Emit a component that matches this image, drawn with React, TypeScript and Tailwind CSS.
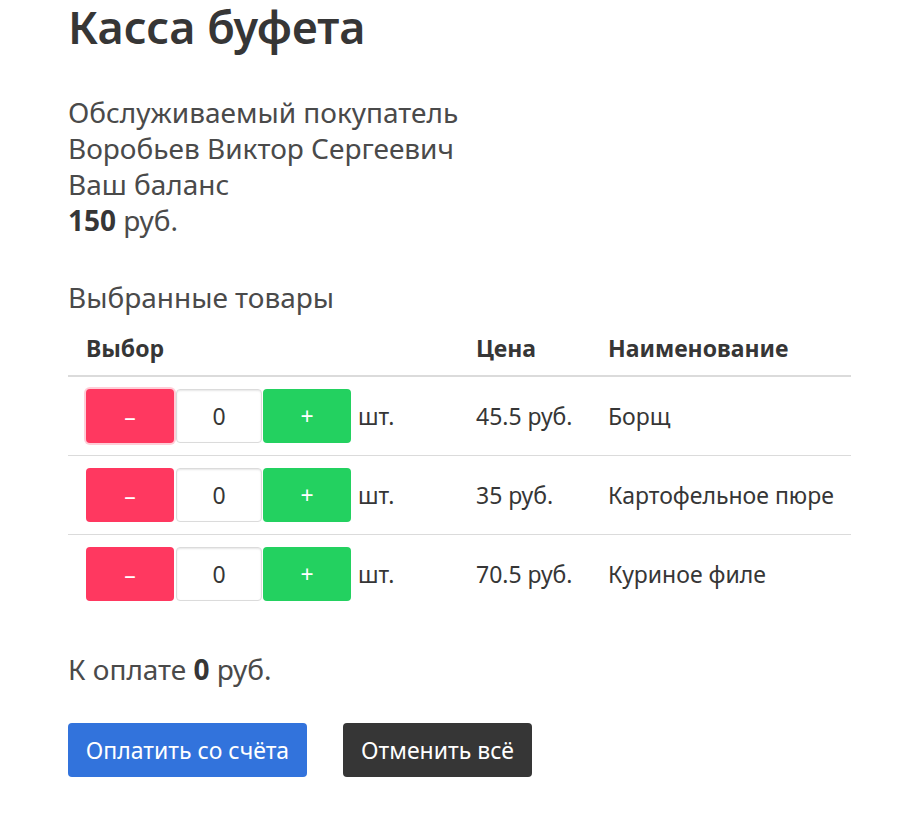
import React from "react";

const items = [
  { price: "45.5 руб.", name: "Борщ", focus: true },
  { price: "35 руб.", name: "Картофельное пюре", focus: false },
  { price: "70.5 руб.", name: "Куриное филе", focus: false },
];

export default function App() {
  return (
    <div
      className="min-h-screen bg-white text-[#4a4a4a]"
      style={{ fontFamily: '"Noto Sans", "Open Sans", sans-serif' }}
    >
      <div className="pl-[68px] w-[851px]">
        <h1 className="text-[45px] leading-[54px] font-semibold text-[#363636]">Касса буфета</h1>
        <div className="mt-[40px] text-[28px] leading-[36px]">
          <div>Обслуживаемый покупатель</div>
          <div>Воробьев Виктор Сергеевич</div>
          <div>Ваш баланс</div>
          <div>
            <strong className="font-bold text-[#363636]">150</strong> руб.
          </div>
        </div>
        <div className="mt-[41px] text-[28px] leading-[36px]">Выбранные товары</div>
        <table className="mt-[6px] w-[783px] table-fixed border-collapse text-[23px] leading-[30px] text-[#363636]">
          <colgroup>
            <col className="w-[390px]" />
            <col className="w-[132px]" />
            <col className="w-[261px]" />
          </colgroup>
          <thead>
            <tr className="border-b-2 border-[#dbdbdb]">
              <th className="text-left font-bold px-[18px] py-[12px]">Выбор</th>
              <th className="text-left font-bold px-[18px] py-[12px]">Цена</th>
              <th className="text-left font-bold px-[18px] py-[12px]">Наименование</th>
            </tr>
          </thead>
          <tbody>
            {items.map((it, i) => (
              <tr key={i} className={i < items.length - 1 ? "border-b border-[#dbdbdb]" : ""}>
                <td className="px-[18px] py-[12px]">
                  <div className="flex items-center">
                    <button
                      className={
                        "w-[88px] h-[54px] rounded-[4px] bg-[#ff3860] text-white text-[23px] flex items-center justify-center " +
                        (it.focus ? "shadow-[0_0_0_2px_rgba(255,56,96,0.25)]" : "")
                      }
                    >
                      –
                    </button>
                    <div className="ml-[2px] w-[86px] h-[54px] rounded-[4px] border border-[#dbdbdb] bg-white shadow-[inset_0_1px_2px_rgba(10,10,10,0.1)] flex items-center justify-center text-[23px] text-[#363636]">
                      0
                    </div>
                    <button className="ml-[1px] w-[88px] h-[54px] rounded-[4px] bg-[#23d160] text-white text-[23px] flex items-center justify-center">
                      +
                    </button>
                    <span className="ml-[7px]">шт.</span>
                  </div>
                </td>
                <td className="px-[18px] py-[12px] whitespace-nowrap">{it.price}</td>
                <td className="px-[18px] py-[12px] whitespace-nowrap">{it.name}</td>
              </tr>
            ))}
          </tbody>
        </table>
        <div className="mt-[38px] text-[28px] leading-[36px]">
          К оплате <strong className="font-bold text-[#363636]">0</strong> руб.
        </div>
        <div className="mt-[36px] flex gap-[36px] pb-[40px]">
          <button className="w-[239px] h-[54px] rounded-[4px] bg-[#3273dc] text-white text-[23px] flex items-center justify-center">
            Оплатить со счёта
          </button>
          <button className="w-[189px] h-[54px] rounded-[4px] bg-[#363636] text-white text-[23px] flex items-center justify-center">
            Отменить всё
          </button>
        </div>
      </div>
    </div>
  );
}
